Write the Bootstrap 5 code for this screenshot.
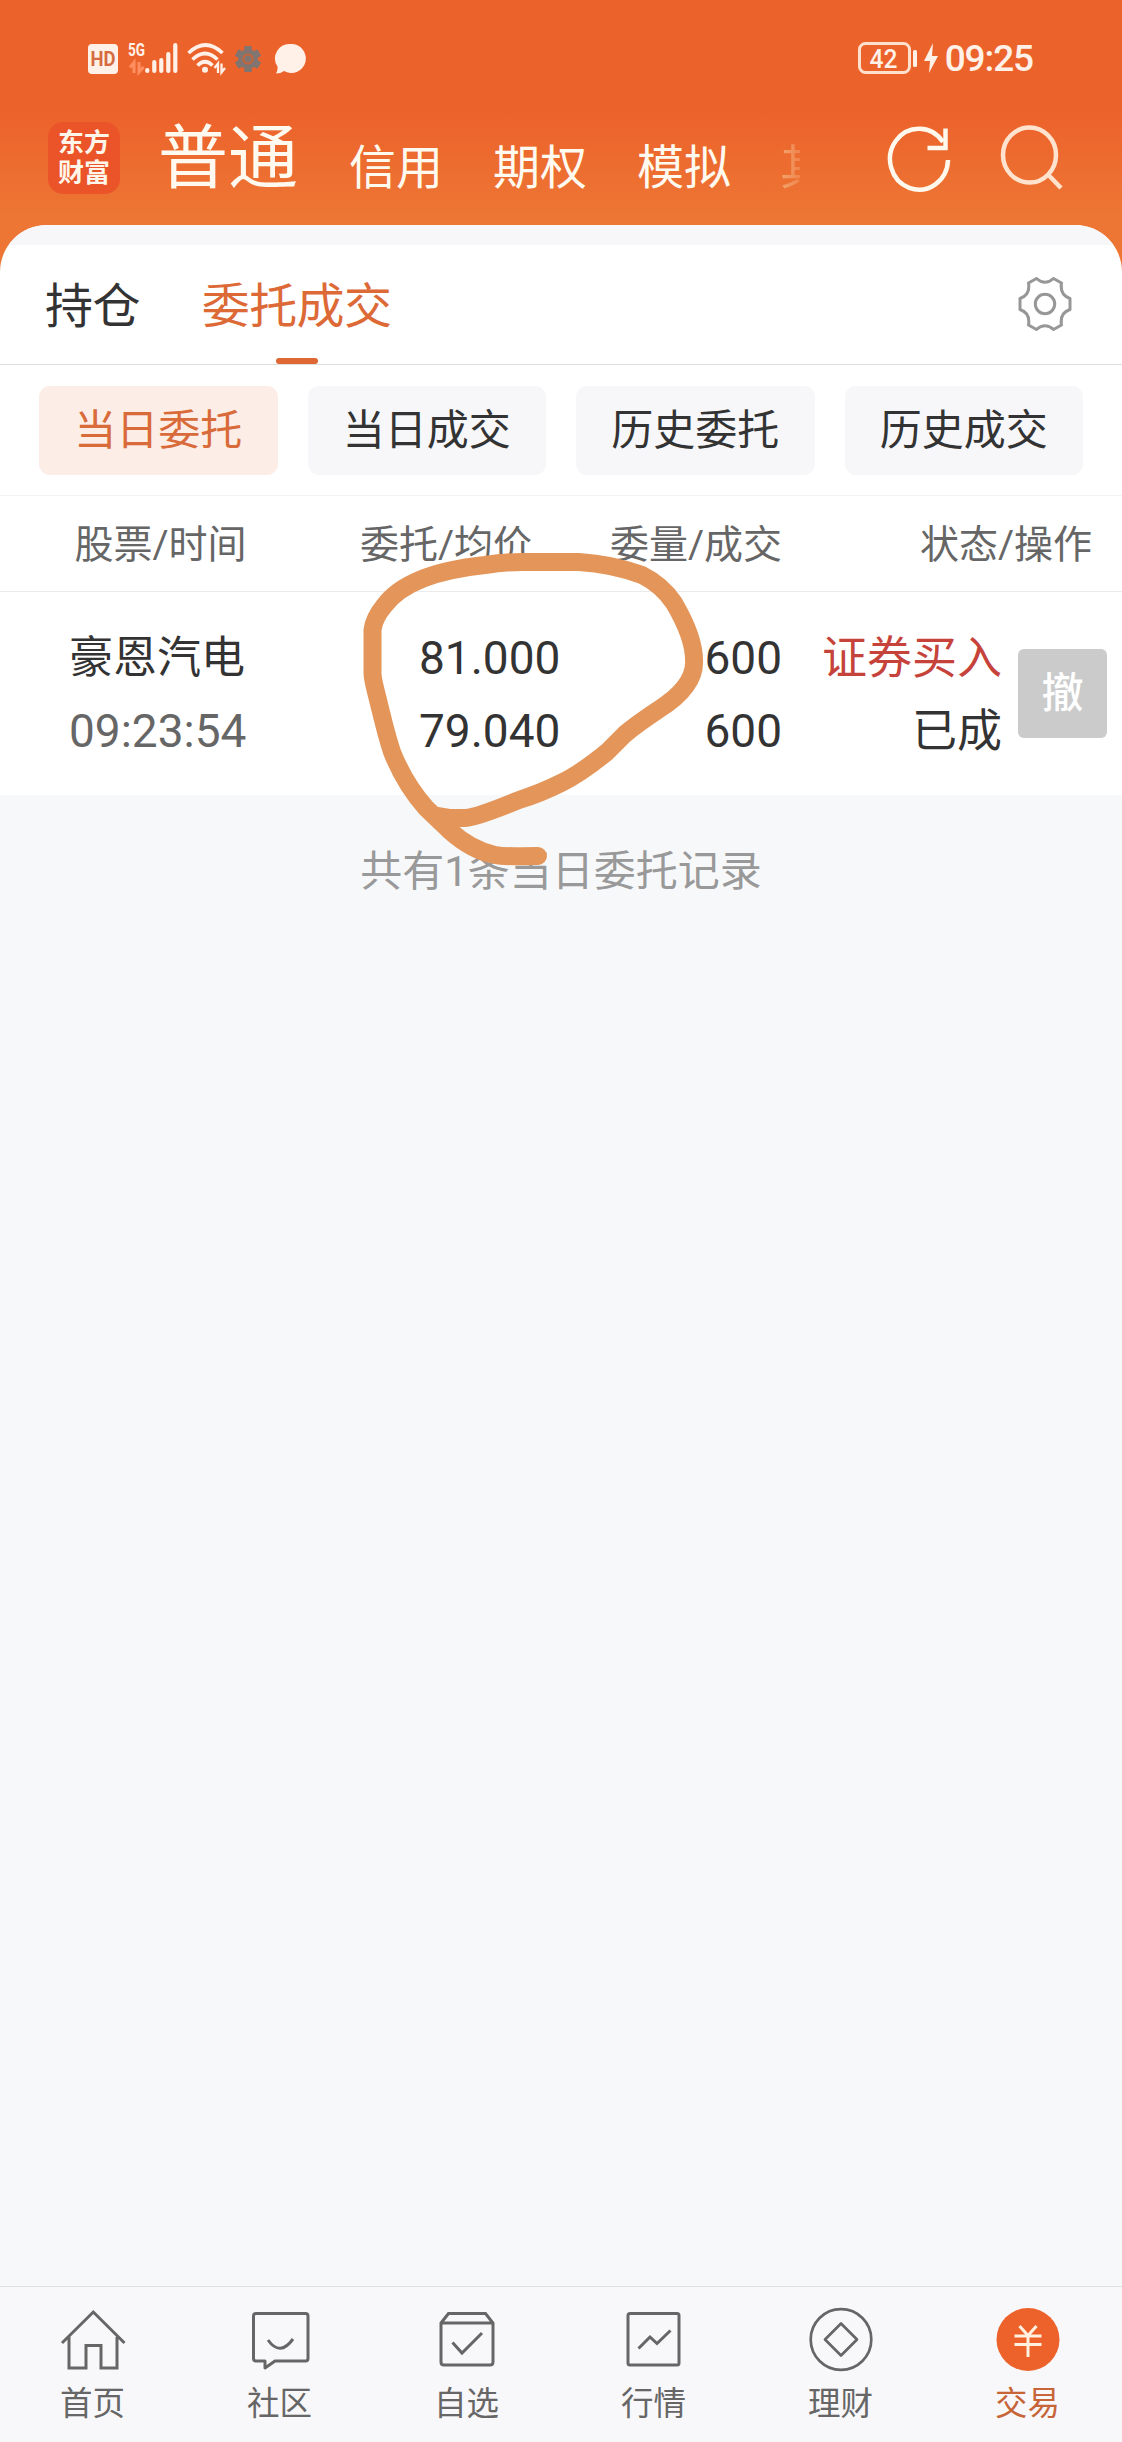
<!DOCTYPE html>
<html lang="zh-CN">
<head>
<meta charset="utf-8">
<meta name="viewport" content="width=device-width, initial-scale=1">
<title>当日委托</title>
<link href="https://cdn.jsdelivr.net/npm/bootstrap@5.3.0/dist/css/bootstrap.min.css" rel="stylesheet">
<style>
body{font-family:Roboto,"Noto Sans CJK SC",sans-serif;background:#f7f8fa;color:#333}
svg{display:block;flex:none}
.screen{width:1122px;height:2442px;overflow:hidden}
.top-area{height:272px;background:linear-gradient(#ec622b 0,#ec622b 112px,#ed7634 215px,#ed7634 100%)}
.status{height:112px;padding:42px 89px 0 88px}
.clock{font-size:37px;line-height:34px;font-weight:500;color:#fff1e8;letter-spacing:-1.1px}
.brand-row{height:113px;color:#fffaf0;padding-left:48px}
.brand{width:72px;height:72px;margin-top:10px;border-radius:15px;background:#ea5428;font-weight:700;font-size:26px;line-height:30px;padding-top:6px;color:#fff6ea;text-align:center}
.seg-main{font-size:70px;line-height:70px;margin:12px 0 0 38px}
.seg{font-size:47px;line-height:48px;margin-top:32px}
.seg-cut{width:20px;overflow:hidden;white-space:nowrap;color:#f3a673;-webkit-mask-image:linear-gradient(90deg,#000,#0006);mask-image:linear-gradient(90deg,#000,#0006)}
.sheet{margin-top:-47px;border-radius:47px 47px 0 0;background:#fff;overflow:hidden}
.strip{height:20px;background:#f7f7fa}
.tabs{height:120px;border-bottom:1px solid #dedede;padding:0 50px 0 45px}
.tab{font-size:48px;line-height:123px;letter-spacing:-.6px;height:119px;margin-right:62px;position:relative;color:#333;text-decoration:none}
.tab.on{color:#dc6936}
.tab.on::after{content:"";position:absolute;left:74px;bottom:0;width:42px;height:6px;border-radius:3px;background:#df6734}
.pills{height:131px;padding:21px 39px 0;gap:30px;border-bottom:1px solid #f3f3f4}
.pill{flex:1 1 0;height:89px;line-height:89px;border-radius:11px;background:#f7f7fa;border:0;padding:0;font-size:42px;color:#333}
.pill.on{background:#fcede6;color:#d96a39}
.head{height:96px;border-bottom:1px solid #ebebeb;font-size:39px;line-height:98px;color:#666}
.c1{width:321px}.c2{width:250px}.c3{width:211px}
.entry{height:203px;font-size:45px;line-height:73px;padding-top:30px}
.entry .c1{padding-left:69px}
.entry .c2{padding-left:98px;font-size:46px}
.entry .c3{font-size:46px}
.stock{font-size:44px}
.stamp{color:#666;font-size:46px}
.c4{width:220px}
.buy{color:#c5433b}
.cancel{width:89px;height:89px;margin:27px 0 0 16px;border-radius:6px;background:#cbcbcb;color:#fff;border:0;padding:0;font-size:42px;font-weight:500;line-height:89px}
.total{margin-top:48px;font-size:42px;line-height:58px;color:#999}
.bottom-nav{height:156px;border-top:1px solid #e1e1e3;background:#f8f8fa;color:#666}
.nav-cell{flex:1 1 0;font-size:32.5px;line-height:36px;padding-top:13px;position:relative;right:1px}
.nav-cell svg{margin:0 auto 12px}
.nav-cell.on{color:#c76538}
.scribble{position:absolute;left:0;top:0;pointer-events:none}
</style>
</head>
<body>
<div class="screen position-relative d-flex flex-column">
  <header class="top-area flex-shrink-0">
    <div class="status d-flex justify-content-between align-items-start">
      <svg width="220" height="34" viewBox="0 0 220 34" fill="#fff1e8" font-family="Roboto,sans-serif">
        <rect x="0" y="2" width="30" height="30" rx="4"/>
        <text x="2.500" y="24" font-size="20" font-weight="700" fill="#d66b40" textLength="25" lengthAdjust="spacingAndGlyphs">HD</text>
        <text x="40" y="14" font-size="19" font-weight="700" textLength="17" lengthAdjust="spacingAndGlyphs">5G</text>
        <path d="M46 31V20.500l-4 5M51 20v10l4.500-5" fill="none" stroke="#ff8f60" stroke-width="3"/>
        <path d="M59.300 29v-1M66.300 29v-9M73.300 29V18M80.300 29V12M87.300 29V3" stroke="#fff1e8" stroke-width="4.200" stroke-linecap="round"/>
        <path d="M100.500 11Q117.500-5 134.500 11M104.500 17.500Q117 5.500 129.500 17.500M109.500 23.500Q117 16 124.500 23.500" fill="none" stroke="#fff1e8" stroke-width="3.600"/>
        <circle cx="117" cy="27.800" r="3"/>
        <path d="M130 31V21.500l-3.500 4.500M133.500 21.500v9l3.500-4.500" fill="none" stroke="#fff1e8" stroke-width="2.300"/>
        <g transform="translate(160 17)"><path d="M0-13V13M-11.300-6.500 11.300 6.500M-11.300 6.500 11.300-6.500" stroke="#807571" stroke-width="7.500"/><circle r="10" fill="#807571"/><circle r="4.600" fill="none" stroke="#c5643b" stroke-width="2"/></g>
        <path d="M203 2a14.500 14.500 0 1 1-7 27q-3 2.500-8 2.500 2-3 1.500-7A14.500 14.500 0 0 1 203 2z"/>
      </svg>
      <div class="d-flex align-items-start">
        <svg width="87" height="34" viewBox="0 0 87 34" fill="#fff1e8">
          <rect x="1.500" y="1.500" width="50" height="29" rx="6" fill="none" stroke="#ffe0cd" stroke-width="3"/>
          <text x="11.500" y="25.500" font-family="Roboto,sans-serif" font-size="26" font-weight="500" textLength="28" lengthAdjust="spacingAndGlyphs">42</text>
          <rect x="55" y="8" width="4" height="17" rx="1.500"/>
          <path d="M75 1 66 19h6l-1 12 9-17h-6z"/>
        </svg>
        <span class="clock">09:25</span>
      </div>
    </div>
    <div class="brand-row d-flex align-items-start">
      <div class="brand flex-shrink-0">东方<br>财富</div>
      <div class="seg-main">普通</div>
      <div class="seg" style="margin-left:51px">信用</div>
      <div class="seg" style="margin-left:50px">期权</div>
      <div class="seg" style="margin-left:50px">模拟</div>
      <div class="seg seg-cut" style="margin-left:49px">其</div>
      <svg class="ms-auto" style="margin-right:47px;margin-top:12px" width="66" height="70" viewBox="0 0 66 70" fill="none" stroke="#fff8ec" stroke-width="4.500"><path d="M61 36A29 30.500 0 1 1 56 18"/><path d="M58.500 4.500V24H40.500"/></svg>
      <svg style="margin-right:56px;margin-top:12px" width="66" height="70" viewBox="0 0 66 70" fill="none" stroke="#ffe3cf" stroke-width="4.500"><ellipse cx="29.500" cy="31" rx="26.500" ry="27.500"/><path d="M47.500 50 61 64"/></svg>
    </div>
  </header>
  <main class="sheet flex-shrink-0 position-relative">
    <div class="strip"></div>
    <nav class="tabs d-flex align-items-start">
      <a class="tab" href="#">持仓</a>
      <a class="tab on" href="#">委托成交</a>
      <svg class="ms-auto" style="margin-top:32px" width="54" height="54" viewBox="-27 -27 54 54" fill="none" stroke="#979797" stroke-width="3" stroke-linejoin="round"><path d="M-8.500-25.500Q0-18 8.500-25.500L16.500-21Q14.500-9 25-5.500V5.500Q14.500 9 16.500 21L8.500 25.500Q0 18-8.500 25.500L-16.500 21Q-14.500 9-25 5.500V-5.500Q-14.500-9-16.500-21Z"/><circle r="9.700"/></svg>
    </nav>
    <div class="pills d-flex">
      <button class="pill on">当日委托</button><button class="pill">当日成交</button><button class="pill">历史委托</button><button class="pill">历史成交</button>
    </div>
    <div class="head d-flex">
      <div class="c1 text-center">股票/时间</div><div class="c2 text-center">委托/均价</div><div class="c3 text-end">委量/成交</div><div class="flex-fill text-end" style="padding-right:30px">状态/操作</div>
    </div>
    <div class="entry d-flex">
      <div class="c1"><div class="stock">豪恩汽电</div><div class="stamp">09:23:54</div></div>
      <div class="c2"><div>81.000</div><div>79.040</div></div>
      <div class="c3 text-end"><div>600</div><div>600</div></div>
      <div class="c4 text-end"><div class="buy">证券买入</div><div>已成</div></div>
      <button class="cancel">撤</button>
    </div>
  </main>
  <p class="total text-center mb-0">共有1条当日委托记录</p>
  <footer class="bottom-nav d-flex text-center mt-auto flex-shrink-0">
    <div class="nav-cell"><svg width="72" height="74" viewBox="0 0 72 74" fill="none" stroke="#666" stroke-width="3"><path d="M5 43 36.300 12 67.500 43M12 37V68H29V45.500H44V68H60V37"/></svg>首页</div>
    <div class="nav-cell"><svg width="72" height="74" viewBox="0 0 72 74" fill="none" stroke="#666" stroke-width="3" stroke-linejoin="round"><path d="M12 13.500H61.500Q64 13.500 64 16V58.500Q64 61 61.500 61H31L21 68V61H12Q9.500 61 9.500 58.500V16Q9.500 13.500 12 13.500ZM24 40Q36 57 49 39"/></svg>社区</div>
    <div class="nav-cell"><svg width="72" height="74" viewBox="0 0 72 74" fill="none" stroke="#666" stroke-width="3"><path d="M10 23 17.500 13.500H54.500L62 23V62Q62 65 59 65H13Q10 65 10 62ZM10 23H62M21.500 42.500 31 53 51 33"/></svg>自选</div>
    <div class="nav-cell"><svg width="72" height="74" viewBox="0 0 72 74" fill="none" stroke="#666" stroke-width="3"><rect x="10" y="13.500" width="51" height="51.500" rx="2"/><path d="M20.500 48.500 32 37 39 43.500 52.500 30.500"/></svg>行情</div>
    <div class="nav-cell"><svg width="72" height="74" viewBox="0 0 72 74" fill="none" stroke="#666" stroke-width="2.700" stroke-linejoin="round"><circle cx="36" cy="39.500" r="30.300"/><path d="M36 23.500 52 39.500 36 55.500 20 39.500Z"/></svg>理财</div>
    <div class="nav-cell on"><svg width="72" height="74" viewBox="0 0 72 74" fill="none" stroke="#fff0df" stroke-width="3"><circle cx="36" cy="39.500" r="31.500" fill="#ec622a" stroke="none"/><path d="M27.500 26 36 35.500 44.500 26M22.500 36H49.500M22.500 44.500H49.500M36 35V57"/></svg>交易</div>
  </footer>
  <svg class="scribble" width="1122" height="900" viewBox="0 0 1122 900" fill="none" stroke="#e4965a" stroke-width="18" stroke-linecap="round" stroke-linejoin="round"><path d="M538 856C515 856 505 857 495 855C475 851 460 840 449 830L426 808C410 790 400 772 392 752C385 731 381 711 376 692Q372.500 678 372.500 673V630Q374 618 384 606Q408 573 485 565Q505 562 522 562H579Q612 564 642 575Q662 585 674 603Q694 637 694 660Q696 686 658 710Q637 724 625 734L607 752Q580 774 561 783Q541 793 519 800Q475 818 465 818H449L437 816"/></svg>
</div>
<script src="https://cdn.jsdelivr.net/npm/bootstrap@5.3.0/dist/js/bootstrap.bundle.min.js"></script>
</body>
</html>
